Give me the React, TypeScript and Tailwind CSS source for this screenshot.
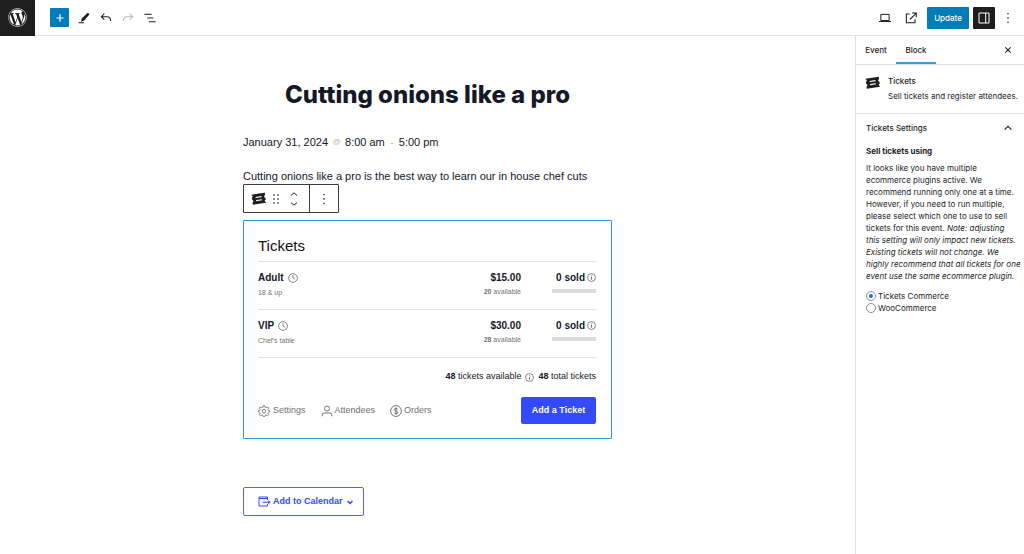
import type { ReactNode } from "react"
import { FaWordpress } from "react-icons/fa"

interface Ticket {
  name: string
  description: string
  price: string
  available: number
  sold: number
}

const tickets: Ticket[] = [
  { name: "Adult", description: "18 & up", price: "$15.00", available: 20, sold: 0 },
  { name: "VIP", description: "Chef's table", price: "$30.00", available: 28, sold: 0 },
]

function Icon({ className, children }: { className?: string; children: ReactNode }) {
  return (
    <svg
      viewBox="0 0 24 24"
      fill="none"
      stroke="currentColor"
      strokeWidth="1.5"
      aria-hidden="true"
      className={`shrink-0 ${className ?? ""}`}
    >
      {children}
    </svg>
  )
}

function TicketIcon({ className }: { className?: string }) {
  return (
    <Icon className={className}>
      <path
        stroke="none"
        fill="currentColor"
        d="M.8 5.8 22 2.6 22.6 6.4Q20.8 7.2 21.1 9 21.4 10.4 23.2 10.6L23.6 13.6Q21.8 14.4 22.1 16 22.3 17.2 23.8 17.6L24 18.6 3 21.8 2.4 18.2Q4 17.4 3.7 15.8 3.4 14.4 1.8 14L1.4 10.8Q3.1 10 2.8 8.4 2.5 7.2 1 6.8Z"
      />
      <path stroke="#fff" strokeWidth="1.7" d="m7.4 10.4 9.4-1.4M8.2 15.4l9.4-1.4" />
    </Icon>
  )
}

function ClockIcon() {
  return (
    <Icon className="size-[10px] text-[#727272]">
      <circle cx="12" cy="12" r="10.5" strokeWidth="2" />
      <path d="M12 5v7l5 3" strokeWidth="2" />
    </Icon>
  )
}

function InfoIcon() {
  return (
    <Icon className="size-[9px] text-[#606060]">
      <circle cx="12" cy="12" r="10.5" strokeWidth="2" />
      <path d="M12 10.5V18M12 6v2.4" strokeWidth="2.4" />
    </Icon>
  )
}

function MoreIcon() {
  return (
    <Icon className="size-4">
      <path stroke="none" fill="currentColor" d="M11 4.5h2v2h-2zM11 11h2v2h-2zM11 17.5h2v2h-2z" />
    </Icon>
  )
}

function EditorHeader() {
  return (
    <header className="flex h-9 items-center border-b border-[#e4e4e4] pr-2">
      <button aria-label="View posts" className="flex h-9 w-[35px] items-center justify-center bg-[#1e1e1e] text-white">
        <FaWordpress className="size-[19px]" />
      </button>
      <button aria-label="Add block" className="ml-[15px] flex size-[19px] items-center justify-center rounded-[1px] bg-[#007cba] text-white">
        <Icon className="size-4">
          <path d="M12 6.5v11M6.5 12h11" strokeWidth="1.8" />
        </Icon>
      </button>
      <div className="ml-[7px] flex items-center gap-[6px]">
        <button aria-label="Tools">
          <Icon className="size-4">
            <path stroke="none" fill="currentColor" d="m17.6 4 2.7 2.5L12 16.2l-4.6 1.3 1.2-4.6zM4 18.3h8V20H4z" />
          </Icon>
        </button>
        <button aria-label="Undo">
          <Icon className="size-4">
            <path d="M9.5 5.5 5 10l4.5 4.5M5 10h8.5q5.5 0 5.5 6.5" strokeWidth="1.6" />
          </Icon>
        </button>
        <button aria-label="Redo" disabled className="text-[#bbb]">
          <Icon className="size-4">
            <path d="m14.5 5.5 4.5 4.5-4.5 4.5M19 10h-8.5Q5 10 5 16.5" strokeWidth="1.6" />
          </Icon>
        </button>
        <button aria-label="Document overview">
          <Icon className="size-4">
            <path d="M3.5 6.5h11M8 12h9M10.5 17.5h10" strokeWidth="1.6" />
          </Icon>
        </button>
      </div>
      <div className="ml-auto flex items-center">
        <button aria-label="View">
          <Icon className="size-4">
            <path d="M5.8 6.5h12.4v9.2H5.8zM3 17.3h18" />
          </Icon>
        </button>
        <button aria-label="View event" className="ml-[10px]">
          <Icon className="size-4">
            <path d="M10 6H5v13h13v-5M13.5 4.5H20V11M19.5 5l-9 9" strokeWidth="1.6" />
          </Icon>
        </button>
        <button className="ml-2 h-[22px] w-[42px] rounded-[1px] bg-[#007cba] text-[8px] font-medium text-white">Update</button>
        <button aria-label="Settings" className="ml-1 flex size-[22px] items-center justify-center rounded-[1px] bg-[#1e1e1e] text-white">
          <Icon className="size-4">
            <path d="M4.5 4.5h15v15h-15zM14.5 4.5v15" />
          </Icon>
        </button>
        <button aria-label="Options" className="ml-[5px]">
          <MoreIcon />
        </button>
      </div>
    </header>
  )
}

function BlockToolbar() {
  return (
    <div role="toolbar" className="flex h-[29px] w-fit rounded-[1px] border border-[#3a3a3a] bg-white">
      <div className="flex w-[66px] items-center border-r border-[#3a3a3a] pl-[7px]">
        <button aria-label="Tickets">
          <TicketIcon className="size-[15px]" />
        </button>
        <button aria-label="Drag" className="ml-[2px]">
          <Icon className="size-4">
            <path
              stroke="none"
              fill="currentColor"
              d="M8 5h2v2H8zM14 5h2v2h-2zM8 11h2v2H8zM14 11h2v2h-2zM8 17h2v2H8zM14 17h2v2h-2z"
            />
          </Icon>
        </button>
        <div className="ml-[3px] flex flex-col gap-[2px]">
          <button aria-label="Move up">
            <svg viewBox="0 0 14 8" fill="none" stroke="currentColor" className="h-2 w-[14px]">
              <path d="m4 5.5 3-2.7 3 2.7" />
            </svg>
          </button>
          <button aria-label="Move down">
            <svg viewBox="0 0 14 8" fill="none" stroke="currentColor" className="h-2 w-[14px]">
              <path d="m4 2.5 3 2.7 3-2.7" />
            </svg>
          </button>
        </div>
      </div>
      <button aria-label="Options" className="flex w-7 items-center justify-center">
        <MoreIcon />
      </button>
    </div>
  )
}

function TicketRow({ ticket }: { ticket: Ticket }) {
  return (
    <li className="flex h-12 border-b border-[#e4e4e4] pt-2 text-[#141827]">
      <div className="flex-1">
        <div className="flex h-[15px] items-center gap-1 text-[10px] font-bold">
          {ticket.name}
          <ClockIcon />
        </div>
        <div className="mt-[2px] text-[7px] leading-[12px] text-[#727272]">{ticket.description}</div>
      </div>
      <div className="text-right">
        <div className="text-[10px] leading-[15px] font-bold">{ticket.price}</div>
        <div className="mt-[1px] text-[7px] leading-[12px] text-[#727272]">
          <b>{ticket.available}</b> available
        </div>
      </div>
      <div className="flex w-[75px] flex-col items-end">
        <div className="flex h-[15px] items-center gap-[2px] text-[10px] font-bold">
          {ticket.sold} sold
          <InfoIcon />
        </div>
        <div className="mt-1 h-1 w-11 bg-[#dcdcde]">
          <div className="h-full bg-[#334aff]" style={{ width: `${(ticket.sold / ticket.available) * 100}%` }} />
        </div>
      </div>
    </li>
  )
}

function TicketsBlock() {
  return (
    <section className="mt-[7px] rounded-[1px] border border-[#2b99cf] pt-[15px] pr-[15px] pb-[14px] pl-[14px] font-['Liberation_Sans',Arial,sans-serif]">
      <h2 className="border-b border-[#e4e4e4] pb-[5px] text-[15px] leading-[20px] text-[#111]">Tickets</h2>
      <ul>
        {tickets.map((ticket) => (
          <TicketRow key={ticket.name} ticket={ticket} />
        ))}
      </ul>
      <div className="mt-3 flex h-[14px] items-center justify-end gap-1 text-[9px] text-[#141827]">
        <span>
          <b>48</b> tickets available
        </span>
        <InfoIcon />
        <span>
          <b>48</b> total tickets
        </span>
      </div>
      <div className="mt-[13px] flex items-center gap-[15px] text-[9px] text-[#727272]">
        <button className="flex items-center gap-[3px]">
          <Icon className="size-3">
            <path
              d="m10.2 1.5-.7 3.2-2 .9-2.8-1.8-2.4 2.5L4.2 9l-.8 2-3 .7v2l3 .8.8 2-1.7 2.8 2.4 2.4 2.7-1.7 2 .8.7 2.5h3.4l.7-2.5 2-.8 2.8 1.7 2.4-2.4-1.7-2.8.9-2 2.8-.8v-2l-2.8-.7-.9-2 1.7-2.7-2.4-2.5-2.8 1.8-2-.9-.7-3.2z"
              strokeWidth="1.8"
            />
            <circle cx="12" cy="12.3" r="3.6" strokeWidth="1.8" />
          </Icon>
          Settings
        </button>
        <button className="flex items-center gap-[2px]">
          <Icon className="size-3">
            <circle cx="12" cy="7" r="5" strokeWidth="2" />
            <path d="M2.5 22.5v-3q0-3.5 4-3.5h11q4 0 4 3.5v3" strokeWidth="2" />
          </Icon>
          Attendees
        </button>
        <button className="flex items-center gap-[2px]">
          <Icon className="size-3">
            <circle cx="12" cy="12" r="10.8" strokeWidth="2" />
            <path d="M15.5 8.5q-1-1.7-3.5-1.7-3.3 0-3.3 2.5 0 2 3.3 2.6 3.7.6 3.7 2.9 0 2.5-3.7 2.5-2.7 0-3.8-2M12 4.5v15" strokeWidth="2" />
          </Icon>
          Orders
        </button>
        <button className="ml-auto h-[27px] w-[75px] rounded-[2px] bg-[#334aff] text-[9px] font-bold text-white">
          Add a Ticket
        </button>
      </div>
    </section>
  )
}

function Sidebar() {
  return (
    <aside className="w-[169px] shrink-0 border-l border-[#e0e0e0] text-[8px] leading-[12px]">
      <div role="tablist" className="flex h-[29px] items-stretch border-b border-[#e0e0e0] pr-2 font-medium">
        <button role="tab" aria-selected="false" className="w-10">
          Event
        </button>
        <button role="tab" aria-selected="true" className="w-10 border-b-2 border-[#3a9bdc] pt-[2px]">
          Block
        </button>
        <button aria-label="Close settings" className="ml-auto">
          <Icon className="size-4">
            <path d="m8 8 8 8m0-8-8 8" strokeWidth="1.6" />
          </Icon>
        </button>
      </div>
      <div className="flex gap-2 border-b border-[#e0e0e0] pt-[10px] pb-[9px] pl-[9px]">
        <TicketIcon className="size-[15px]" />
        <div>
          <h2 className="font-medium">Tickets</h2>
          <p className="mt-[3px] mb-[2px] whitespace-nowrap">Sell tickets and register attendees.</p>
        </div>
      </div>
      <div className="pt-[6px] pr-[2px] pl-[10px]">
        <button aria-expanded="true" className="flex w-full items-center justify-between pr-[6px] font-medium">
          Tickets Settings
          <Icon className="size-4">
            <path d="m7 14.5 5-5 5 5" strokeWidth="1.6" />
          </Icon>
        </button>
        <fieldset className="pt-[9px]">
          <legend className="float-left font-bold">Sell tickets using</legend>
          <p className="clear-both pt-[5px]">
            It looks like you have multiple ecommerce plugins active. We recommend running only one at a time. However,
            if you need to run multiple, please select which one to use to sell tickets for this event.{" "}
            <em>
              Note: adjusting <span className="whitespace-nowrap">this setting</span> will only impact new tickets.
              Existing tickets will not change. We highly recommend that all tickets for one event use the same
              ecommerce plugin.
            </em>
          </p>
          <div className="mt-2">
            {["Tickets Commerce", "WooCommerce"].map((provider, index) => (
              <label key={provider} className="flex h-3 items-center gap-[2px]">
                <input
                  type="radio"
                  name="provider"
                  defaultChecked={index === 0}
                  className="size-[10px] appearance-none rounded-full border border-[#8c8f94] bg-white bg-clip-content p-[2px] checked:bg-[#2271d1]"
                />
                {provider}
              </label>
            ))}
          </div>
        </fieldset>
      </div>
    </aside>
  )
}

export default function App() {
  return (
    <div className="flex min-h-screen flex-col bg-white font-[Inter,sans-serif] text-[#1e1e1e]">
      <EditorHeader />
      <div className="flex flex-1">
        <main className="min-w-0 flex-1">
          <div className="mx-auto max-w-[369px] pt-[43px]">
            <h1 className="text-center text-[24px] leading-[32px] font-extrabold whitespace-nowrap text-[#141827]">
              Cutting onions like a pro
            </h1>
            <div className="mt-[23px] flex items-center font-['Liberation_Sans',Arial,sans-serif] text-[11px] leading-[16px] text-[#141827]">
              <span>January 31, 2024</span>
              <span className="w-[17px] text-center text-[8px] text-[#bababa]">@</span>
              <span>8:00 am</span>
              <span className="w-[14px] text-center text-[#bababa]">-</span>
              <span>5:00 pm</span>
            </div>
            <p className="mt-[18px] font-['Liberation_Sans',Arial,sans-serif] text-[11px] leading-[16px] text-[#141827]">
              Cutting onions like a pro is the best way to learn our in house chef cuts
            </p>
            <BlockToolbar />
            <TicketsBlock />
            <button className="mt-12 flex h-[29px] w-[121px] items-center rounded-[2px] border border-[#5264ff] pl-[14px] font-['Liberation_Sans',Arial,sans-serif] text-[9px] font-bold text-[#334aff]">
              <svg viewBox="0 0 26 22" fill="none" stroke="currentColor" strokeWidth="2" aria-hidden="true" className="mr-[2px] h-[11px] w-[13px]">
                <path d="M19 8V2H2v18h17v-4M2 5h17" />
                <path d="M9 12.5h13" />
                <path d="m20.5 8.5 5 4-5 4z" fill="currentColor" stroke="none" />
              </svg>
              Add to Calendar
              <svg viewBox="0 0 10 8" fill="none" stroke="currentColor" strokeWidth="1.5" aria-hidden="true" className="ml-[2px] h-2 w-[10px]">
                <path d="m2.5 3 2.5 2.5L7.5 3" />
              </svg>
            </button>
          </div>
        </main>
        <Sidebar />
      </div>
    </div>
  )
}
